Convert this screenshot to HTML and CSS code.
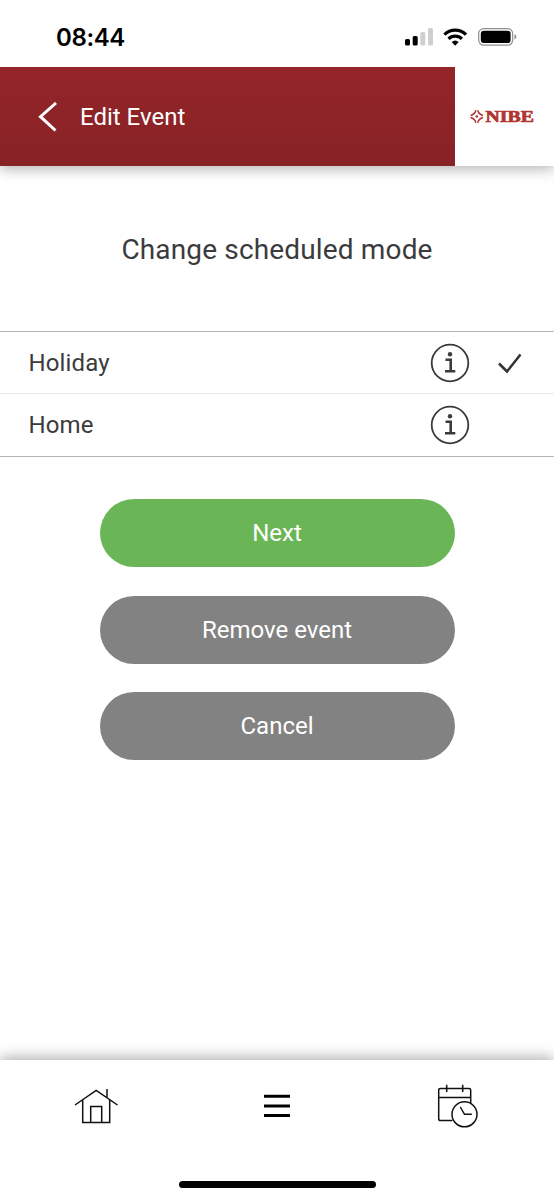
FILE: index.html
```
<!DOCTYPE html>
<html lang="en">
<head>
<meta charset="utf-8">
<title>Edit Event</title>
<link rel="stylesheet" href="styles.css">
</head>
<body>
<div class="app">
  <div class="status">
    <span class="time">08:44</span>
    <svg class="status-icons" width="112" height="20" viewBox="405 27 112 20">
      <rect x="405" y="39" width="5" height="6.500" rx="1.500"/>
      <rect x="412.700" y="36" width="5" height="9.500" rx="1.500"/>
      <rect class="weak" x="420.300" y="32" width="5" height="13.500" rx="1.500"/>
      <rect class="weak" x="428" y="28" width="5" height="17.500" rx="1.500"/>
      <g fill="none" stroke="#000" stroke-width="3.100">
        <path d="M444.400 34.600a15.200 15.200 0 0 1 21.600 0"/>
        <path d="M448.500 38.900a9.500 9.500 0 0 1 13.400 0"/>
      </g>
      <path d="M455.200 45.700l-3.500-3.600a5.200 5.200 0 0 1 7 0z"/>
      <rect x="478.700" y="28.600" width="34" height="16.600" rx="5" fill="none" stroke="#8f8f8f" stroke-width="1.200"/>
      <rect x="480.800" y="30.700" width="29.800" height="12.400" rx="3"/>
      <path d="M514.500 34.300c2.500.8 2.500 4.400 0 5.200z" fill="#8f8f8f"/>
    </svg>
  </div>
  <header class="header">
    <div class="title-bar">
      <svg class="back" width="20" height="30" viewBox="0 0 20 30" fill="none" stroke="#fff" stroke-width="3"><path d="M18 1L2.500 14.700L17.500 28.500"/></svg>
      <span class="title">Edit Event</span>
    </div>
    <div class="brand">
      <svg width="70" height="24" viewBox="0 0 70 24">
        <g transform="translate(6.800 11.500)" fill="none" stroke="#b23430" stroke-width="1.500">
          <path d="M-.9-6.200Q-2-2-6.200-.9M.9-6.200Q2-2 6.200-.9M-.9 6.200Q-2 2-6.200 .9M.9 6.200Q2 2 6.200 .9"/>
          <circle r="1.300" fill="#b23430" stroke="none"/>
        </g>
        <text class="logo-text" x="15.500" y="17" textLength="48.500" lengthAdjust="spacingAndGlyphs">NIBE</text>
      </svg>
    </div>
  </header>
  <main class="content">
    <h1 class="heading">Change scheduled mode</h1>
    <div class="modes">
      <div class="mode">
        <span class="mode-name">Holiday</span>
        <svg class="info" width="40" height="40" viewBox="0 0 40 40"><circle cx="20" cy="20" r="18.300"/><circle class="dot" cx="20" cy="11.300" r="2.200"/><path d="M15.500 16.700H20.700V28.300M15 28.300H25.300"/></svg>
        <svg class="check" width="26" height="24" viewBox="0 0 26 24"><path d="M2 12.500L10 20.500L23.500 3.500"/></svg>
      </div>
      <div class="mode">
        <span class="mode-name">Home</span>
        <svg class="info" width="40" height="40" viewBox="0 0 40 40"><circle cx="20" cy="20" r="18.300"/><circle class="dot" cx="20" cy="11.300" r="2.200"/><path d="M15.500 16.700H20.700V28.300M15 28.300H25.300"/></svg>
      </div>
    </div>
    <div class="actions">
      <button class="button primary">Next</button>
      <button class="button">Remove event</button>
      <button class="button">Cancel</button>
    </div>
  </main>
  <footer class="footer">
    <nav class="tabs">
      <svg width="44" height="38" viewBox="74 1087 44 38"><path d="M75 1105L96.200 1090.300L117.500 1105M82.700 1100V1122.500H109.700V1100M107 1097V1089M90.700 1122.500V1106.400H101.700V1122.500"/></svg>
      <svg class="menu" width="26" height="24" viewBox="0 0 26 24"><path d="M0 2.200H26M0 11.900H26M0 21.500H26"/></svg>
      <svg width="42" height="44" viewBox="437 1084 42 44"><path d="M452.500 1120.500H440.500Q438.700 1120.500 438.700 1118.700V1090.200Q438.700 1088.500 440.500 1088.500H469Q470.700 1088.500 470.700 1090.200V1103M438.700 1097.500H470.700M446.700 1084.800V1092M462.700 1084.800V1092M460.300 1107L464.500 1114.300H471.800"/><circle cx="464.500" cy="1114.300" r="12.500"/></svg>
    </nav>
    <div class="home-indicator"></div>
  </footer>
</div>
</body>
</html>
```
FILE: styles.css
```
* { box-sizing: border-box; }
body { margin: 0; background: #fff; font-family: Roboto, "Liberation Sans", sans-serif; color: #3b3b3d; }
.app { height: 1200px; display: flex; flex-direction: column; overflow: hidden; }
.status { height: 67px; flex: none; display: flex; justify-content: space-between; padding: 22px 37px 0 56px; }
.time { font: 600 24px/30px Inter, sans-serif; color: #000; letter-spacing: -0.4px; padding-top: 1px; }
.status-icons { margin-top: 5px; }
.weak { fill: #cfcfcf; }
.header { height: 99px; flex: none; display: flex; background: #fff; box-shadow: 0 3px 13px rgba(0, 0, 0, 0.3); clip-path: inset(0 0 -30px 0); }
.title-bar { width: 454.500px; display: flex; align-items: center; padding-left: 38px; background: linear-gradient(#942529, #872226); color: #fff; }
.title { margin-left: 22px; font-size: 24px; line-height: 28px; padding-top: 1px; }
.brand { flex: 1; display: flex; align-items: center; padding-left: 15px; }
.logo-text { font: bold 17.500px "Liberation Serif", serif; fill: #b23430; stroke: #b23430; stroke-width: 0.700px; }
.content { flex: 1; }
.heading { margin: 65px 0 62px; font-size: 28px; line-height: 38px; font-weight: 400; text-align: center; letter-spacing: 0.150px; }
.modes { border-top: 1px solid #b5b5b5; border-bottom: 1px solid #b5b5b5; height: 126px; }
.mode { height: 62px; display: flex; align-items: center; padding-left: 28px; }
.mode:first-child { height: 61px; padding-top: 1px; }
.mode + .mode { border-top: 1px solid #e9e9e9; }
.mode-name { width: 402px; padding-left: 0.500px; font-size: 24px; letter-spacing: 0.150px; }
.info { fill: none; stroke: #3b3b3d; stroke-width: 1.800px; }
.info path { stroke-width: 2.600px; }
.info .dot { fill: #3b3b3d; stroke: none; }
.check { margin-left: 27px; fill: none; stroke: #333; stroke-width: 2.500px; }
.actions { display: flex; flex-direction: column; align-items: center; gap: 28.700px; padding-top: 42px; }
.button { width: 355px; height: 68px; border: 0; border-radius: 34px; background: #828282; color: #fff; font: 400 24px Roboto, sans-serif; padding: 0; }
.primary { background: #6ab656; }
.footer { height: 140px; flex: none; display: flex; flex-direction: column; align-items: center; background: #fff; box-shadow: 0 -3px 13px rgba(0, 0, 0, 0.3); clip-path: inset(-30px 0 0 0); }
.tabs { height: 121px; width: 100%; padding: 24px 75px 0 74px; display: flex; justify-content: space-between; align-items: flex-start; }
.tabs svg { fill: none; stroke: #111; stroke-width: 1.500px; }
.tabs svg:first-child { margin-top: 3px; }
.tabs .menu { margin: 10px 1px 0 0; stroke: #000; stroke-width: 3px; }
.home-indicator { width: 197px; height: 7px; border-radius: 4px; background: #000; }
```
